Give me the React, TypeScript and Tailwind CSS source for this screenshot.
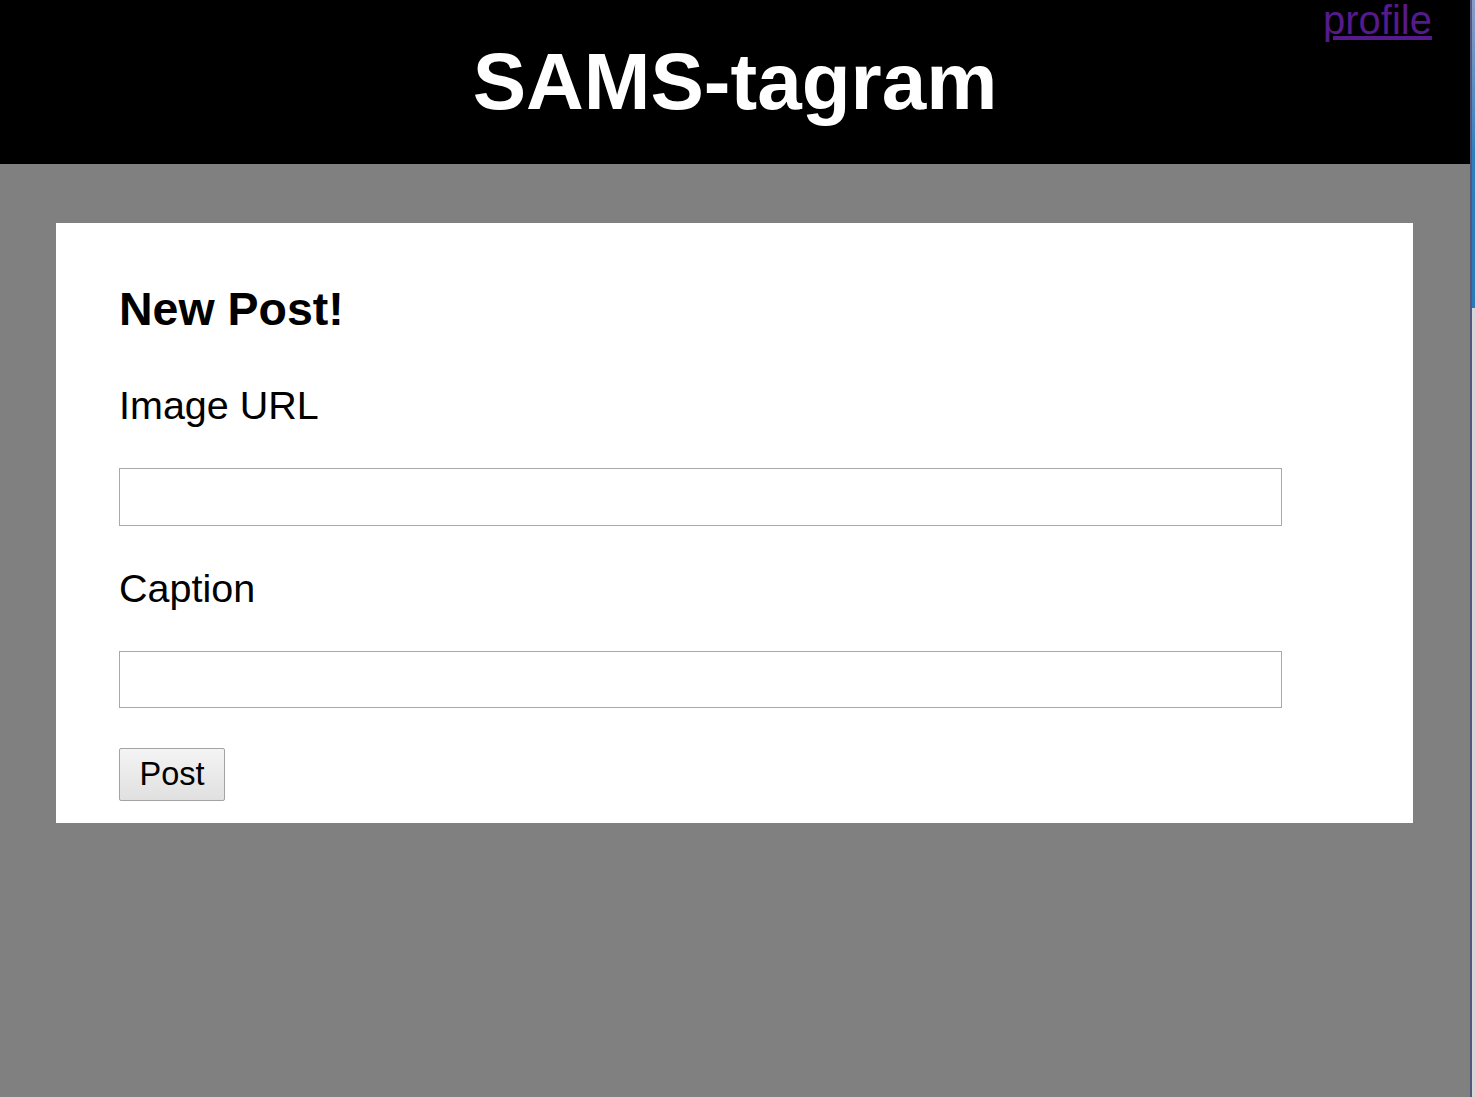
import React from "react";

export default function App() {
  return (
    <div
      className="flex w-[1475px] h-[1097px] overflow-hidden"
      style={{ fontFamily: '"Liberation Sans", Arial, sans-serif' }}
    >
      <div className="w-[1470px] h-full bg-[#808080] flex flex-col">
        <header className="relative h-[164px] bg-black flex items-center justify-center shrink-0">
          <h1 className="text-white font-bold text-[80px] leading-[92px] m-0">SAMS-tagram</h1>
          <a
            href="#"
            className="absolute right-[38px] top-[-3px] text-[40px] leading-[46px] text-[#551a8b] underline"
          >
            profile
          </a>
        </header>
        <div className="pt-[59px] pl-[56px]">
          <div className="w-[1357px] h-[600px] bg-white pt-[60px] px-[63px] pb-[22px] flex flex-col items-start">
            <h2 className="text-black font-bold text-[46.5px] leading-[53px] m-0">New Post!</h2>
            <label className="mt-[47px] text-black text-[39.5px] leading-[45px]">Image URL</label>
            <input
              type="text"
              className="mt-[40px] w-[1163px] h-[58px] border border-[#a9a9a9] bg-white outline-none"
            />
            <label className="mt-[40px] text-black text-[39.5px] leading-[45px]">Caption</label>
            <input
              type="text"
              className="mt-[40px] w-[1163px] h-[57px] border border-[#a9a9a9] bg-white outline-none"
            />
            <button className="mt-[40px] w-[106px] h-[53px] border border-[#a3a3a3] rounded-[2px] bg-gradient-to-b from-[#f4f4f4] to-[#e0e0e0] text-black text-[32.5px] leading-none flex items-center justify-center">
              Post
            </button>
          </div>
        </div>
      </div>
      <div className="w-[2px] h-full bg-[#56567c]" />
      <div className="flex-1 h-full flex flex-col">
        <div className="h-[308px] bg-gradient-to-b from-[#8a9cc4] via-[#2e7fbd] to-[#2a7ab8]" />
        <div className="flex-1 bg-[#d6d6d8]" />
      </div>
    </div>
  );
}
